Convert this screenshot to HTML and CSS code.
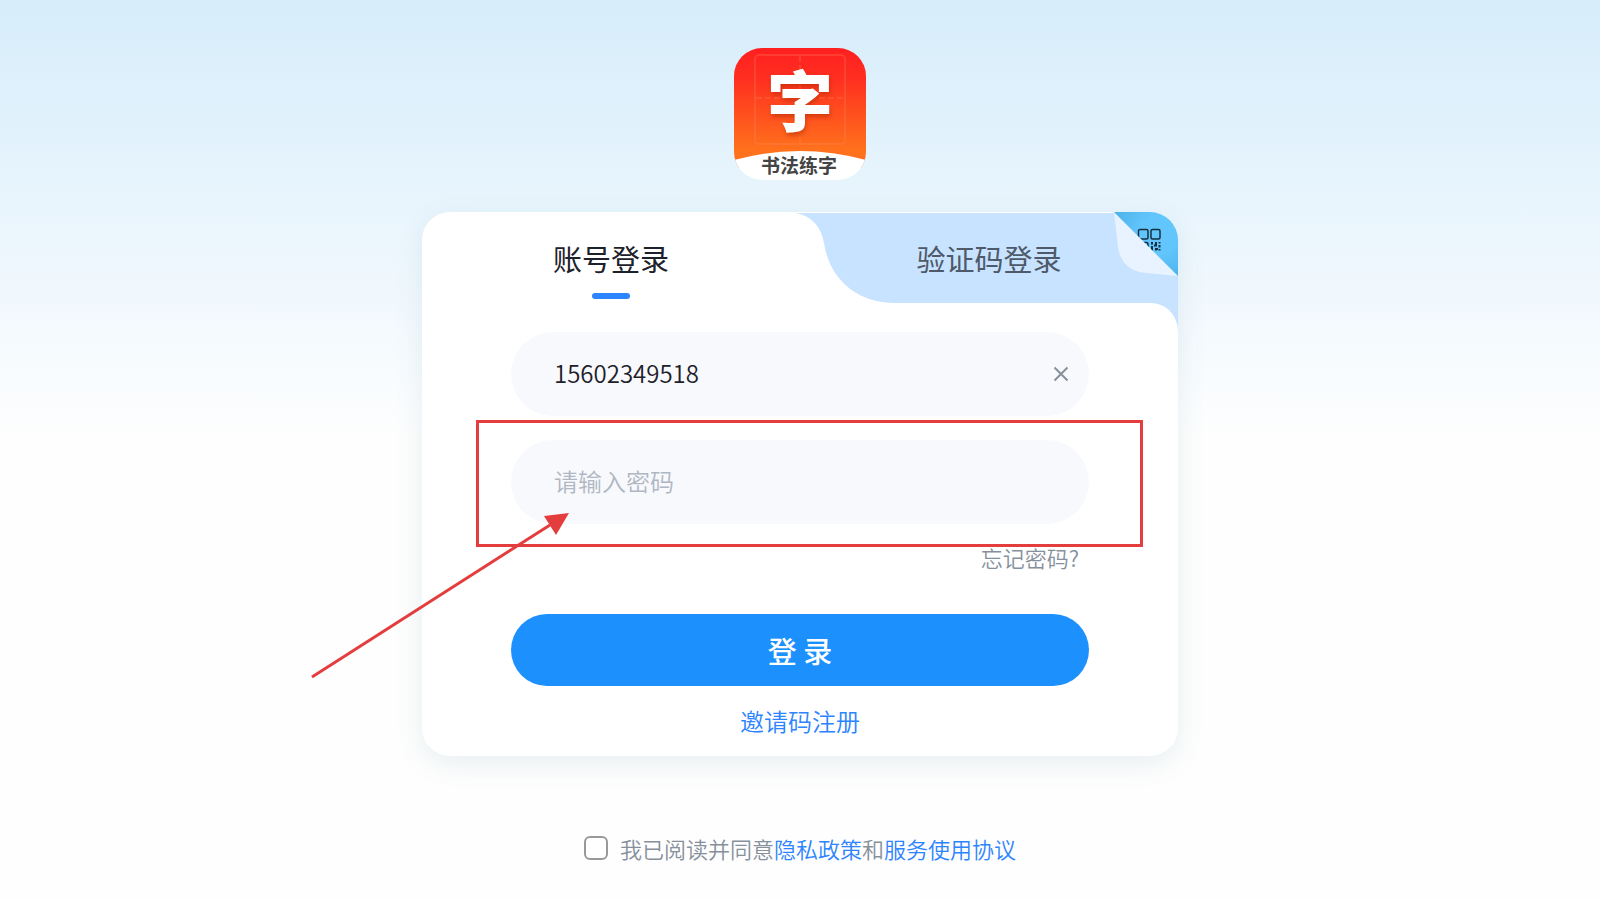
FILE: index.html
```html
<!DOCTYPE html>
<html lang="zh-CN">
<head>
    <meta charset="UTF-8">
    <meta name="viewport" content="width=device-width, initial-scale=1.0">
    <title>书法练字</title>
    <link rel="stylesheet" href="styles.css">
</head>
<body>
    <main class="login-page">
        <svg class="logo" viewBox="0 0 132 132" role="img" aria-label="书法练字">
            <defs>
                <linearGradient id="logo-bg" x1="0" y1="0" x2="0" y2="1">
                    <stop offset="0" stop-color="#ff1f20"/>
                    <stop offset="0.25" stop-color="#ff2e20"/>
                    <stop offset="0.85" stop-color="#ff711c"/>
                </linearGradient>
                <clipPath id="logo-clip"><rect width="132" height="132" rx="28"/></clipPath>
            </defs>
            <g clip-path="url(#logo-clip)">
                <rect width="132" height="120" fill="url(#logo-bg)"/>
                <g fill="none" stroke="#ff8a60" stroke-opacity="0.25">
                    <rect x="21" y="7" width="90" height="89" rx="4" stroke-width="2"/>
                    <path d="M66 8V96M22 50H110" stroke-width="2" stroke-dasharray="6 3"/>
                </g>
                <path d="M0 112Q66 94 132 112V132H0Z" fill="#fff"/>
                <text class="logo-char" x="66" y="78" text-anchor="middle">字</text>
                <text class="logo-name" x="65" y="125" text-anchor="middle">书法练字</text>
            </g>
        </svg>

        <div class="card">
            <!-- inactive tab background -->
            <svg class="tab-shape" viewBox="0 0 756 120" aria-hidden="true">
                <path d="M374 1C389 4 399 14 402 31C407 66 434 91 473 91H728C744 91 756 103 756 120V29A28 28 0 0 0 728 1Z" fill="#c8e3ff"/>
            </svg>
            <div class="tabs">
                <button type="button" class="tab active">账号登录</button>
                <button type="button" class="tab">验证码登录</button>
            </div>

            <button type="button" class="qr-corner" aria-label="扫码登录">
                <svg viewBox="0 0 64 64" aria-hidden="true">
                    <defs>
                        <radialGradient id="corner-bg" cx="0.7" cy="0.35" r="0.75">
                            <stop offset="0.4" stop-color="#62c5fc"/>
                            <stop offset="1" stop-color="#4bb3e9"/>
                        </radialGradient>
                        <clipPath id="corner-clip"><path d="M0 0H36A28 28 0 0 1 64 28V64Z"/></clipPath>
                    </defs>
                    <path d="M0 0L4 35C6 51 17 60 32 61L64 64Z" fill="#e8f3ff"/>
                    <g clip-path="url(#corner-clip)">
                        <rect width="64" height="64" fill="url(#corner-bg)"/>
                        <g fill="none" stroke="#16303f" stroke-width="1.5">
                            <rect x="24.5" y="17.5" width="9.5" height="9.5" rx="1.5"/>
                            <rect x="37" y="17.5" width="9" height="9.5" rx="1.5"/>
                            <rect x="24.5" y="30.5" width="9.5" height="9" rx="1.5"/>
                            <path d="M38 30V32.5M38 34V38.5M42 30V34.5M42 36V38.5M45.5 30V31.5M45.5 33V35.5M45.5 37V38.5M40 33.5H42M42 37H44" stroke-width="2"/>
                        </g>
                    </g>
                </svg>
            </button>

            <form class="login-form">
                <div class="field">
                    <input type="text" id="account" value="15602349518" aria-label="手机号">
                    <button type="button" class="clear" aria-label="清除">
                        <svg viewBox="0 0 16 16" aria-hidden="true">
                            <path d="M1.5 1.5L14.5 14.5M14.5 1.5L1.5 14.5" fill="none" stroke="#86909c" stroke-width="2"/>
                        </svg>
                    </button>
                </div>

                <div class="field">
                    <input type="password" id="password" placeholder="请输入密码" aria-label="密码">
                    <div class="highlight"></div>
                    <svg class="arrow" viewBox="0 0 280 190" aria-hidden="true">
                        <path d="M12 177L250 25" stroke="#e43d3d" stroke-width="3"/>
                        <path d="M269 13L244 16L256 35Z" fill="#e43d3d"/>
                    </svg>
                </div>

                <a class="forgot" href="#">忘记密码?</a>
                <button type="submit" class="submit">登 录</button>
                <a class="register" href="#">邀请码注册</a>
            </form>
        </div>

        <div class="agreement">
            <input type="checkbox" id="agree">
            <label for="agree">我已阅读并同意<a href="#">隐私政策</a>和<a href="#">服务使用协议</a></label>
        </div>
    </main>
</body>
</html>
```

FILE: styles.css
```css
* {
    box-sizing: border-box;
}

body {
    margin: 0;
    min-height: 100vh;
    font-family: "Noto Sans CJK SC", sans-serif;
    font-weight: 350;
    color: #1d2129;
    background: #fefefe linear-gradient(#d6edfa 0, #e9f5fd 210px, #fefefe 440px) no-repeat;
}

button,
input {
    font-family: inherit;
    font-weight: inherit;
}

button {
    padding: 0;
    border: none;
    background: none;
    cursor: pointer;
}

a {
    color: #2d84ff;
    text-decoration: none;
}

.login-page {
    display: flex;
    flex-direction: column;
    align-items: center;
    padding: 48px 16px 32px;
}

.logo {
    width: 132px;
    height: 132px;
}

.logo-char {
    font-size: 66px;
    font-weight: 900;
    fill: #fff;
    filter: drop-shadow(1px 3px 2px rgba(170, 40, 0, 0.5));
}

.logo-name {
    font-size: 19px;
    font-weight: 700;
    fill: #444;
}

.card {
    position: relative;
    width: 100%;
    max-width: 756px;
    margin-top: 32px;
    border-radius: 28px;
    background-color: #fff;
    box-shadow: 0 8px 28px rgba(40, 110, 130, 0.1);
}

/* Sits behind the tab labels */
.tab-shape {
    position: absolute;
    top: 0;
    left: 0;
    width: 100%;
}

.tabs {
    position: relative;
    display: flex;
    height: 91px;
}

.tab {
    flex: 1;
    display: flex;
    flex-direction: column;
    align-items: center;
    padding-top: 26px;
    font-size: 29px;
    font-weight: 400;
    line-height: 40px;
    color: #4e5969;
}

.tab.active {
    color: #1d2129;
}

.tab.active::after {
    content: "";
    width: 38px;
    height: 6px;
    margin-top: 15px;
    border-radius: 3px;
    background-color: #2d84ff;
}

/* Folded corner on top of the card */
.qr-corner {
    position: absolute;
    top: 0;
    right: 0;
    width: 64px;
    height: 64px;
}

.qr-corner svg,
.clear svg {
    display: block;
    width: 100%;
}

.login-form {
    display: flex;
    flex-direction: column;
    padding: 29px 89px 16px;
}

.field {
    position: relative;
    display: flex;
    align-items: center;
    height: 84px;
    padding: 0 20px 0 43px;
    border-radius: 42px;
    background-color: #f8f9fd;
}

.field + .field {
    margin-top: 24px;
}

.field input {
    flex: 1;
    min-width: 0;
    padding: 0 0 4px;
    border: none;
    outline: none;
    background: none;
    font-size: 24px;
    color: #1d2129;
}

.field input::placeholder {
    color: #b0b7c3;
}

.clear {
    width: 16px;
    height: 16px;
}

.highlight {
    position: absolute;
    inset: -20px -54px -23px -35px;
    border: 3px solid #e43d3d;
    pointer-events: none;
}

.arrow {
    position: absolute;
    top: 60px;
    left: -211px;
    width: 280px;
    pointer-events: none;
}

.forgot {
    align-self: flex-end;
    margin-top: 16px;
    padding-right: 10px;
    font-size: 22px;
    line-height: 34px;
    color: #86909c;
}

.submit {
    height: 72px;
    margin-top: 40px;
    border-radius: 36px;
    background-color: #1c91fd;
    font-size: 29px;
    font-weight: 500;
    color: #fff;
}

.register {
    align-self: center;
    margin-top: 17px;
    margin-bottom: 1px;
    font-size: 24px;
    line-height: 36px;
}

.agreement {
    display: flex;
    align-items: center;
    gap: 12px;
    margin-top: 74px;
    font-size: 22px;
    line-height: 36px;
    color: #86909c;
}

.agreement input {
    appearance: none;
    width: 24px;
    height: 24px;
    margin: 0;
    border: 2px solid #999;
    border-radius: 6px;
    background-color: #fff;
}

.agreement input:checked {
    border-color: #2d84ff;
    background-color: #2d84ff;
}
```
